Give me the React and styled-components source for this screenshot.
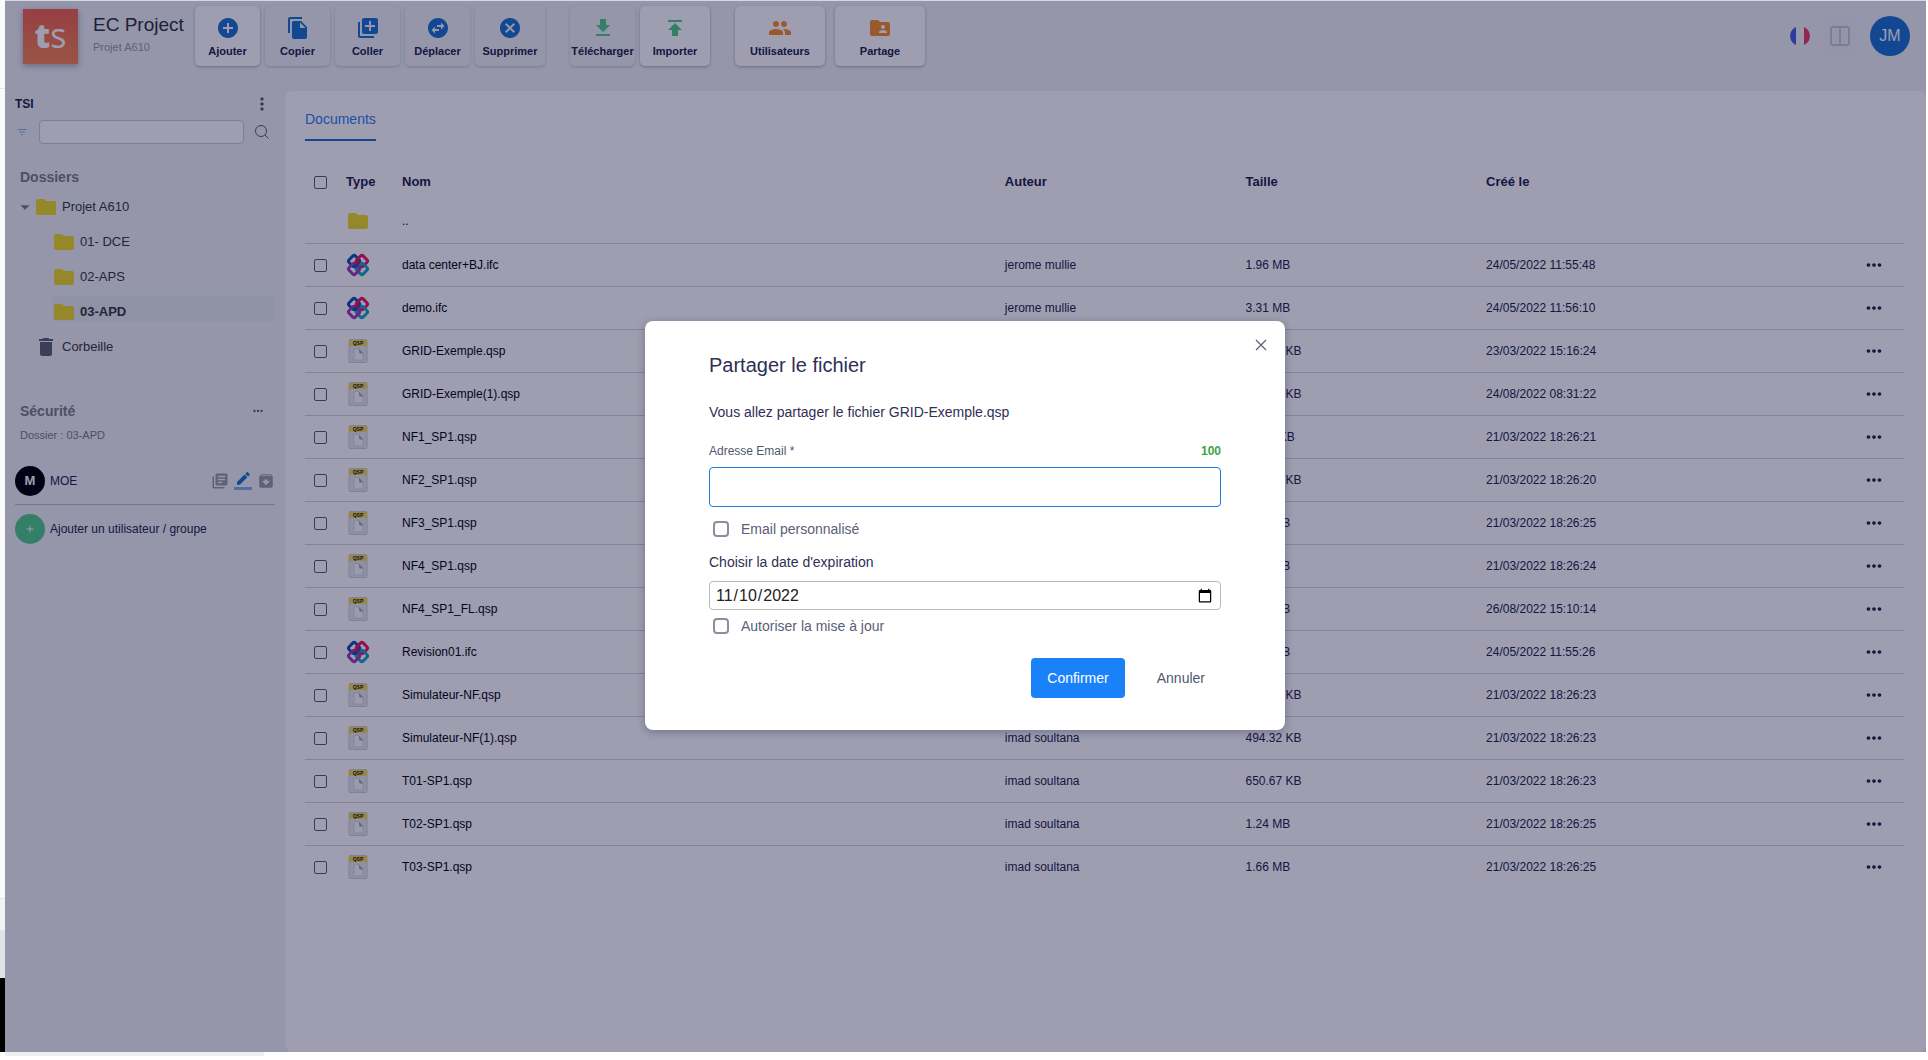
import React, { useState } from 'react';
import styled, { createGlobalStyle } from 'styled-components';
import {
  MdAdd,
  MdAddCircle,
  MdArchive,
  MdArrowDropDown,
  MdCancel,
  MdDelete,
  MdFileCopy,
  MdFileDownload,
  MdFilterList,
  MdFolder,
  MdFolderShared,
  MdLibraryAdd,
  MdLibraryBooks,
  MdMoreHoriz,
  MdMoreVert,
  MdPeople,
  MdPublish,
  MdSwapHorizontalCircle,
} from 'react-icons/md';

const BLUE = '#1b73cf';
const LINK = '#2f80ee';
const GREEN = '#50cc8a';
const ORANGE = '#f68e28';
const YELLOW = '#efdb25';

const GlobalStyle = createGlobalStyle`
  * {
    box-sizing: border-box;
  }

  body {
    margin: 0;
    background: #fff;
    color: #23234b;
    font-family: 'Liberation Sans', Arial, sans-serif;
    font-size: 12px;
  }

  button,
  input {
    font-family: inherit;
  }
`;

const Page = styled.div`
  min-height: 100vh;
  display: grid;
  grid-template-columns: 5px 1fr 2px;
  grid-template-rows: 1fr 8px;
`;

const Edge = styled.div`
  display: flex;
  flex-direction: column;
  background: #fafafa;
`;

const EdgePart = styled.div`
  flex: ${({ $size }) => ($size ? `0 0 ${$size}px` : '1')};
  background: ${({ $color }) => $color};
  border-bottom: ${({ $line }) => ($line ? '1px solid #e4e6e8' : 'none')};
`;

const Footer = styled.div`
  grid-column: 2;
  width: 259px;
  height: 4px;
  background: #f0f0f0;
`;

const Window = styled.div`
  position: relative;
  display: flex;
  flex-direction: column;
  background: #f0f2f3;
  border-top: 1px solid #d3d9e4;
`;

const Header = styled.header`
  height: 90px;
  display: flex;
  align-items: flex-start;
  padding: 5px 16px 0 18px;
`;

const Logo = styled.div`
  width: 55px;
  height: 55px;
  margin: 3px 15px 0 0;
  display: flex;
  align-items: baseline;
  justify-content: center;
  background: linear-gradient(#f5644e, #f78850);
  box-shadow: 0 2px 6px rgba(60, 60, 110, 0.4);
  color: #fff;
  font-family: 'Open Sans', sans-serif;
  font-size: 34px;
  font-weight: 400;
  line-height: 52px;
`;

const LogoBold = styled.b`
  font-weight: 800;
`;

const Titles = styled.div`
  width: 102px;
  padding-top: 7px;
`;

const Title = styled.h1`
  margin: 0;
  color: #2e3440;
  font-size: 19px;
  font-weight: 400;
  line-height: 24px;
  white-space: nowrap;
`;

const Subtitle = styled.div`
  color: #999ba3;
  font-size: 11px;
  line-height: 20px;
`;

const ToolGroup = styled.div`
  display: flex;
  gap: ${({ $gap }) => $gap || 5}px;
  margin-right: 25px;
`;

const ToolButton = styled.button`
  min-width: ${({ $width }) => $width || 65}px;
  height: 60px;
  padding: 10px 1px 0;
  display: flex;
  flex-direction: column;
  align-items: center;
  gap: 4px;
  border: 0;
  border-radius: 5px;
  background: ${({ disabled }) => (disabled ? '#f0f2f3' : '#fff')};
  box-shadow: ${({ disabled }) =>
    disabled ? '0 1px 3px rgba(60, 60, 130, 0.25)' : '0 1px 3px rgba(60, 60, 130, 0.4)'};
  color: #23234b;
  font-size: 11px;
  font-weight: 700;
  line-height: 14px;

  svg {
    width: 24px;
    height: 24px;
    color: ${({ $color }) => $color};
  }
`;

const Account = styled.div`
  margin: 10px 0 0 auto;
  display: flex;
  align-items: center;
`;

const PlainButton = styled.button`
  padding: 0;
  display: flex;
  align-items: center;
  justify-content: center;
  border: 0;
  background: none;
  color: ${({ $color }) => $color || '#5c5f6e'};
`;

const LayoutButton = styled(PlainButton)`
  width: 38px;
  height: 40px;
  margin: 0 11px;
  background: #eff1f5;
`;

const Avatar = styled.div`
  width: ${({ $size }) => $size}px;
  height: ${({ $size }) => $size}px;
  display: flex;
  align-items: center;
  justify-content: center;
  border-radius: 50%;
  background: ${({ $color }) => $color};
  color: #fff;
  font-size: ${({ $size }) => ($size > 30 ? 16 : 13)}px;
  font-weight: ${({ $bold }) => ($bold ? 700 : 400)};
`;

const Body = styled.div`
  flex: 1;
  display: grid;
  grid-template-columns: 280px 1fr;
`;

const Sidebar = styled.aside`
  padding: 4px 10px 0;
`;

const SideHeader = styled.div`
  height: 18px;
  display: flex;
  align-items: center;
  justify-content: space-between;
  padding-right: 3px;
  color: #23234b;
  font-weight: 700;
`;

const Search = styled.form`
  margin-top: 7px;
  padding: 0 6px 0 1px;
  display: flex;
  align-items: center;

  input {
    flex: 1;
    min-width: 0;
    height: 24px;
    margin: 0 11px;
    border: 1px solid #c9ccd6;
    border-radius: 4px;
    background: #fff;
  }
`;

const SectionTitle = styled.h2`
  margin: 0;
  padding: 0 10px 0 5px;
  display: flex;
  align-items: center;
  justify-content: space-between;
  color: #7c7e88;
  font-size: 14px;
  line-height: 20px;
`;

const Folders = styled.section`
  margin-top: 23px;
`;

const Tree = styled.ul`
  margin: 4px 0 0;
  padding: 0;
  list-style: none;
`;

const TreeRow = styled.li`
  height: 25px;
  margin: 0 1px 10px ${({ $nested }) => ($nested ? 37 : 0)}px;
  padding-top: 6px;
  display: flex;
  align-items: center;
  border-radius: 4px;
  background: ${({ $active }) => ($active ? '#e9ebed' : 'none')};
  color: #363844;
  font-size: 13px;
  font-weight: ${({ $active }) => ($active ? 700 : 400)};

  svg {
    flex: none;
  }
`;

const Arrow = styled.span`
  width: 19px;
  display: flex;
  justify-content: center;
  color: #7c7e88;
`;

const TreeLabel = styled.span`
  margin-left: 4px;
`;

const Security = styled.section`
  margin-top: 45px;
`;

const Scope = styled.div`
  padding: 0 5px;
  color: #7c7e88;
  font-size: 11px;
  line-height: 28px;
`;

const Member = styled.div`
  height: 48px;
  display: flex;
  align-items: center;
  gap: 5px;
`;

const Members = styled.div`
  margin-top: 8px;

  ${Member}:first-child {
    border-bottom: 1px solid #c0c2cb;
  }
`;

const Rights = styled.div`
  margin-left: auto;
  display: flex;
  gap: 5px;
`;

const Main = styled.main`
  padding: 0 22px 0 20px;
  border-radius: 8px;
  background: #fff;
`;

const Tab = styled.a`
  height: 50px;
  padding-top: 20px;
  display: inline-block;
  border-bottom: 2px solid ${BLUE};
  color: ${LINK};
  font-size: 14px;
  text-decoration: none;
`;

const Table = styled.table`
  width: 100%;
  margin-top: 22px;
  border-collapse: collapse;
  table-layout: fixed;

  th {
    height: 37px;
    padding: 0;
    font-size: 13px;
    text-align: left;
  }

  td {
    height: 43px;
    padding: 0;
    border-bottom: 1px solid #d3d4da;
  }

  tbody tr:last-child td {
    border-bottom: 0;
  }
`;

const NameCell = styled.td`
  color: #05050f;
`;

const Icon = styled.div`
  width: 24px;
  display: flex;
  justify-content: center;
`;

const MoreButton = styled(PlainButton)`
  margin-left: auto;
  margin-right: 19px;
`;

const Tick = styled.input`
  appearance: none;
  flex: none;
  display: block;
  width: ${({ $large }) => ($large ? 16 : 13)}px;
  height: ${({ $large }) => ($large ? 16 : 13)}px;
  margin: ${({ $large }) => ($large ? '0 12px 0 4px' : '1px 0 0 9px')};
  border: ${({ $large }) => ($large ? '2px solid #8a8fa0' : '1px solid #5c5f6e')};
  border-radius: ${({ $large }) => ($large ? 4 : 2)}px;
  background: #fff;

  &:checked {
    background: ${BLUE};
  }
`;

const Overlay = styled.div`
  position: absolute;
  inset: 0;
  padding: 0 1px 2px 0;
  display: flex;
  align-items: center;
  justify-content: center;
  background: rgba(4, 4, 52, 0.39);
`;

const Dialog = styled.form`
  position: relative;
  width: 640px;
  padding: 32px 64px;
  border-radius: 8px;
  background: #fff;
  color: #2f2f55;
  font-size: 14px;
  box-shadow: 0 2px 8px rgba(20, 20, 60, 0.3);
`;

const Close = styled(PlainButton)`
  position: absolute;
  top: 18px;
  right: 18px;
`;

const DialogTitle = styled.h2`
  margin: 0 0 23px;
  font-size: 20px;
  font-weight: 400;
  line-height: 24px;
`;

const Message = styled.p`
  margin: 0 0 20px;
  line-height: 24px;
`;

const LabelRow = styled.div`
  display: flex;
  justify-content: space-between;
  margin-bottom: 9px;
  color: #505770;
  font-size: 12px;
  line-height: 14px;
`;

const Count = styled.b`
  color: #3aa548;
`;

const EmailInput = styled.input`
  display: block;
  width: 100%;
  height: 40px;
  padding: 0 12px;
  border: 1px solid #1f7ad8;
  border-radius: 4px;
  outline: 0;
`;

const TickLabel = styled.label`
  height: 16px;
  margin: ${({ $wide }) => ($wide ? '14px 0 16px' : '8px 0 24px')};
  display: flex;
  align-items: center;
  color: #5a6078;
`;

const DateLabel = styled.label`
  display: block;
  margin-bottom: 10px;
  line-height: 18px;
`;

const DateInput = styled.input`
  display: block;
  width: 100%;
  height: 29px;
  padding: 0 5px;
  border: 1px solid #b9b9b9;
  border-radius: 4px;
  background: #fff;
  color: #222;
  font-size: 16px;
`;

const Actions = styled.div`
  display: flex;
  justify-content: flex-end;
  gap: 16px;
`;

const ActionButton = styled.button`
  height: 40px;
  padding: 0 16px;
  border: 0;
  border-radius: 4px;
  background: ${({ $primary }) => ($primary ? '#1a82f9' : 'none')};
  color: ${({ $primary }) => ($primary ? '#fff' : '#505770')};
  font-size: 14px;
`;

const FrenchFlag = () => (
  <svg width="20" height="20" viewBox="0 0 20 20">
    <clipPath id="flag">
      <circle cx="10" cy="10" r="10" />
    </clipPath>
    <g clipPath="url(#flag)">
      <path d="M0 0h20v20H0z" fill="#f4f4f6" />
      <path d="M0 0h6v20H0z" fill="#4a60e0" />
      <path d="M14 0h6v20h-6z" fill="#ee3a62" />
    </g>
  </svg>
);

const ColumnsIcon = () => (
  <svg width="20" height="20" viewBox="0 0 20 20" fill="none" stroke="#c9cbd3" strokeWidth="2">
    <rect x="1" y="1" width="18" height="18" rx="2" />
    <path d="M10 1v18" />
  </svg>
);

const SearchIcon = () => (
  <svg width="14" height="14" viewBox="0 0 14 14" fill="none" stroke="#5c5f6e">
    <circle cx="6" cy="6" r="5.5" />
    <path d="M10 10l3.5 3.5" />
  </svg>
);

const CloseIcon = () => (
  <svg width="12" height="12" viewBox="0 0 12 12" stroke="#5b6078" strokeWidth="1.2">
    <path d="M1 1l10 10M11 1L1 11" />
  </svg>
);

const PencilIcon = () => (
  <svg width="18" height="18" viewBox="0 0 24 24" fill={BLUE}>
    <path d="M17.75 7L14 3.25l-10 10V17h3.75l10-10zm2.96-2.96c.39-.39.39-1.02 0-1.41L18.37.29c-.39-.39-1.02-.39-1.41 0L15 2.25 18.75 6l1.96-1.96z" />
    <path d="M0 20h24v4H0z" opacity=".5" />
  </svg>
);

const IfcIcon = () => (
  <svg width="24" height="24" viewBox="0 0 24 24" fill="none" strokeWidth="3">
    <rect x="3.6" y="3.6" width="9" height="9" rx="2" transform="rotate(45 8.1 8.1)" stroke="#1553b4" />
    <rect x="11.4" y="3.6" width="9" height="9" rx="2" transform="rotate(45 15.900 8.1)" stroke="#f0145f" />
    <rect x="11.4" y="11.4" width="9" height="9" rx="2" transform="rotate(45 15.900 15.900)" stroke="#1aa5c4" />
    <rect x="3.6" y="11.4" width="9" height="9" rx="2" transform="rotate(45 8.1 15.900)" stroke="#a03fb4" />
    <path d="M8 14.500l5-5" stroke="#1553b4" />
    <path d="M9.500 8l3 3" stroke="#f0145f" />
  </svg>
);

const QspIcon = () => (
  <svg width="20" height="24" viewBox="0 0 20 24">
    <rect x="1" y=".5" width="18" height="23" rx="1" fill="#e9e9ed" stroke="#cfd0d6" />
    <path d="M1 1h18v6H1z" fill="#f3dc52" />
    <text x="10" y="6" textAnchor="middle" fontSize="5" fontWeight="700" fill="#1a1a10">
      QSP
    </text>
    <path d="M6 9.500h4.500l4.500 4.500v7H6z" fill="#fafafc" stroke="#d9dade" />
    <path d="M10.500 9.500l5 5h-4z" fill="#a5a6ae" />
  </svg>
);

const editTools = [
  { label: 'Ajouter', icon: MdAddCircle },
  { label: 'Copier', icon: MdFileCopy, disabled: true },
  { label: 'Coller', icon: MdLibraryAdd, disabled: true },
  { label: 'Déplacer', icon: MdSwapHorizontalCircle, disabled: true },
  { label: 'Supprimer', icon: MdCancel, disabled: true, width: 70 },
];

const transferTools = [
  { label: 'Télécharger', icon: MdFileDownload, disabled: true },
  { label: 'Importer', icon: MdPublish, width: 70 },
];

const shareTools = [
  { label: 'Utilisateurs', icon: MdPeople, width: 90 },
  { label: 'Partage', icon: MdFolderShared, width: 90 },
];

const folders = ['01- DCE', '02-APS', '03-APD'];

const files = [
  ['data center+BJ.ifc', 'jerome mullie', '1.96 MB', '24/05/2022 11:55:48'],
  ['demo.ifc', 'jerome mullie', '3.31 MB', '24/05/2022 11:56:10'],
  ['GRID-Exemple.qsp', 'imad soultana', '494.32 KB', '23/03/2022 15:16:24'],
  ['GRID-Exemple(1).qsp', 'imad soultana', '494.32 KB', '24/08/2022 08:31:22'],
  ['NF1_SP1.qsp', 'imad soultana', '494.3 KB', '21/03/2022 18:26:21'],
  ['NF2_SP1.qsp', 'imad soultana', '650.67 KB', '21/03/2022 18:26:20'],
  ['NF3_SP1.qsp', 'imad soultana', '1.24 MB', '21/03/2022 18:26:25'],
  ['NF4_SP1.qsp', 'imad soultana', '1.66 MB', '21/03/2022 18:26:24'],
  ['NF4_SP1_FL.qsp', 'imad soultana', '1.66 MB', '26/08/2022 15:10:14'],
  ['Revision01.ifc', 'jerome mullie', '1.96 MB', '24/05/2022 11:55:26'],
  ['Simulateur-NF.qsp', 'imad soultana', '494.32 KB', '21/03/2022 18:26:23'],
  ['Simulateur-NF(1).qsp', 'imad soultana', '494.32 KB', '21/03/2022 18:26:23'],
  ['T01-SP1.qsp', 'imad soultana', '650.67 KB', '21/03/2022 18:26:23'],
  ['T02-SP1.qsp', 'imad soultana', '1.24 MB', '21/03/2022 18:26:25'],
  ['T03-SP1.qsp', 'imad soultana', '1.66 MB', '21/03/2022 18:26:25'],
];

const Tools = ({ items, color, gap }) => (
  <ToolGroup $gap={gap}>
    {items.map(({ label, icon: ToolIcon, disabled, width }) => (
      <ToolButton key={label} type="button" disabled={disabled} $color={color} $width={width}>
        <ToolIcon />
        {label}
      </ToolButton>
    ))}
  </ToolGroup>
);

const SidePanel = () => {
  const [current, setCurrent] = useState('03-APD');

  return (
    <Sidebar>
      <SideHeader>
        TSI
        <PlainButton type="button" aria-label="Menu">
          <MdMoreVert size={20} />
        </PlainButton>
      </SideHeader>
      <Search onSubmit={(event) => event.preventDefault()}>
        <MdFilterList size={12} color="#86aef0" />
        <input aria-label="Rechercher" />
        <PlainButton aria-label="Rechercher">
          <SearchIcon />
        </PlainButton>
      </Search>
      <Folders>
        <SectionTitle>Dossiers</SectionTitle>
        <Tree>
          <TreeRow>
            <Arrow>
              <MdArrowDropDown size={22} />
            </Arrow>
            <MdFolder size={24} color={YELLOW} />
            <TreeLabel>Projet A610</TreeLabel>
          </TreeRow>
          {folders.map((name) => (
            <TreeRow key={name} $nested $active={name === current} onClick={() => setCurrent(name)}>
              <MdFolder size={24} color={YELLOW} />
              <TreeLabel>{name}</TreeLabel>
            </TreeRow>
          ))}
          <TreeRow>
            <Arrow />
            <MdDelete size={24} color="#5f616c" />
            <TreeLabel>Corbeille</TreeLabel>
          </TreeRow>
        </Tree>
      </Folders>
      <Security>
        <SectionTitle>
          Sécurité
          <PlainButton type="button" aria-label="Options">
            <MdMoreHoriz size={14} />
          </PlainButton>
        </SectionTitle>
        <Scope>Dossier : {current}</Scope>
        <Members>
          <Member>
            <Avatar $size={30} $color="#000" $bold>
              M
            </Avatar>
            MOE
            <Rights>
              <PlainButton type="button" aria-label="Lecture" $color="#999ba5">
                <MdLibraryBooks size={18} />
              </PlainButton>
              <PlainButton type="button" aria-label="Écriture">
                <PencilIcon />
              </PlainButton>
              <PlainButton type="button" aria-label="Archive" $color="#999ba5">
                <MdArchive size={18} />
              </PlainButton>
            </Rights>
          </Member>
          <Member>
            <Avatar $size={30} $color={GREEN}>
              <MdAdd size={12} />
            </Avatar>
            Ajouter un utilisateur / groupe
          </Member>
        </Members>
      </Security>
    </Sidebar>
  );
};

const FileRow = ({ file }) => {
  const [name, author, size, date] = file;

  return (
    <tr>
      <td>
        <Tick type="checkbox" aria-label={name} />
      </td>
      <td>
        <Icon>{name.endsWith('.ifc') ? <IfcIcon /> : <QspIcon />}</Icon>
      </td>
      <NameCell>{name}</NameCell>
      <td>{author}</td>
      <td>{size}</td>
      <td>{date}</td>
      <td>
        <MoreButton type="button" aria-label="Actions" $color="#23234b">
          <MdMoreHoriz size={22} />
        </MoreButton>
      </td>
    </tr>
  );
};

const FileTable = () => (
  <Table>
    <colgroup>
      <col style={{ width: 41 }} />
      <col style={{ width: 56 }} />
      <col style={{ width: '37.7%' }} />
      <col style={{ width: '15.05%' }} />
      <col style={{ width: '15.05%' }} />
      <col />
      <col style={{ width: 60 }} />
    </colgroup>
    <thead>
      <tr>
        <th>
          <Tick type="checkbox" aria-label="Documents" />
        </th>
        <th>Type</th>
        <th>Nom</th>
        <th>Auteur</th>
        <th>Taille</th>
        <th>Créé le</th>
        <th />
      </tr>
    </thead>
    <tbody>
      <tr>
        <td />
        <td>
          <Icon>
            <MdFolder size={24} color={YELLOW} />
          </Icon>
        </td>
        <NameCell>..</NameCell>
        <td colSpan={4} />
      </tr>
      {files.map((file) => (
        <FileRow key={file[0]} file={file} />
      ))}
    </tbody>
  </Table>
);

const ShareDialog = () => {
  const [email, setEmail] = useState('');
  const [date, setDate] = useState('2022-11-10');

  return (
    <Dialog role="dialog" aria-labelledby="share-title" onSubmit={(event) => event.preventDefault()}>
      <Close type="button" aria-label="Fermer">
        <CloseIcon />
      </Close>
      <DialogTitle id="share-title">Partager le fichier</DialogTitle>
      <Message>Vous allez partager le fichier GRID-Exemple.qsp</Message>
      <LabelRow>
        <label htmlFor="email">Adresse Email *</label>
        <Count>{100 - email.length}</Count>
      </LabelRow>
      <EmailInput
        id="email"
        maxLength={100}
        value={email}
        onChange={(event) => setEmail(event.target.value)}
      />
      <TickLabel $wide>
        <Tick type="checkbox" $large />
        Email personnalisé
      </TickLabel>
      <DateLabel htmlFor="expiration">Choisir la date d'expiration</DateLabel>
      <DateInput
        id="expiration"
        type="date"
        value={date}
        onChange={(event) => setDate(event.target.value)}
      />
      <TickLabel>
        <Tick type="checkbox" $large />
        Autoriser la mise à jour
      </TickLabel>
      <Actions>
        <ActionButton $primary>Confirmer</ActionButton>
        <ActionButton type="button">Annuler</ActionButton>
      </Actions>
    </Dialog>
  );
};

const App = () => (
  <>
    <GlobalStyle />
    <Page>
      <Edge>
        <EdgePart $size={89} $color="#fafafa" $line />
        <EdgePart $color="#fafafa" $line />
        <EdgePart $size={31} $color="#f3f3f3" />
        <EdgePart $size={48} $color="#dfe3e7" />
        <EdgePart $size={74} $color="#000" />
      </Edge>
      <Window>
        <Header>
          <Logo>
            <LogoBold>t</LogoBold>s
          </Logo>
          <Titles>
            <Title>EC Project</Title>
            <Subtitle>Projet A610</Subtitle>
          </Titles>
          <Tools items={editTools} color={BLUE} />
          <Tools items={transferTools} color={GREEN} />
          <Tools items={shareTools} color={ORANGE} gap={10} />
          <Account>
            <FrenchFlag />
            <LayoutButton type="button" aria-label="Affichage">
              <ColumnsIcon />
            </LayoutButton>
            <Avatar $size={40} $color={BLUE}>
              JM
            </Avatar>
          </Account>
        </Header>
        <Body>
          <SidePanel />
          <Main>
            <Tab href="#documents">Documents</Tab>
            <FileTable />
          </Main>
        </Body>
        <Overlay>
          <ShareDialog />
        </Overlay>
      </Window>
      <Footer />
    </Page>
  </>
);

export default App;
